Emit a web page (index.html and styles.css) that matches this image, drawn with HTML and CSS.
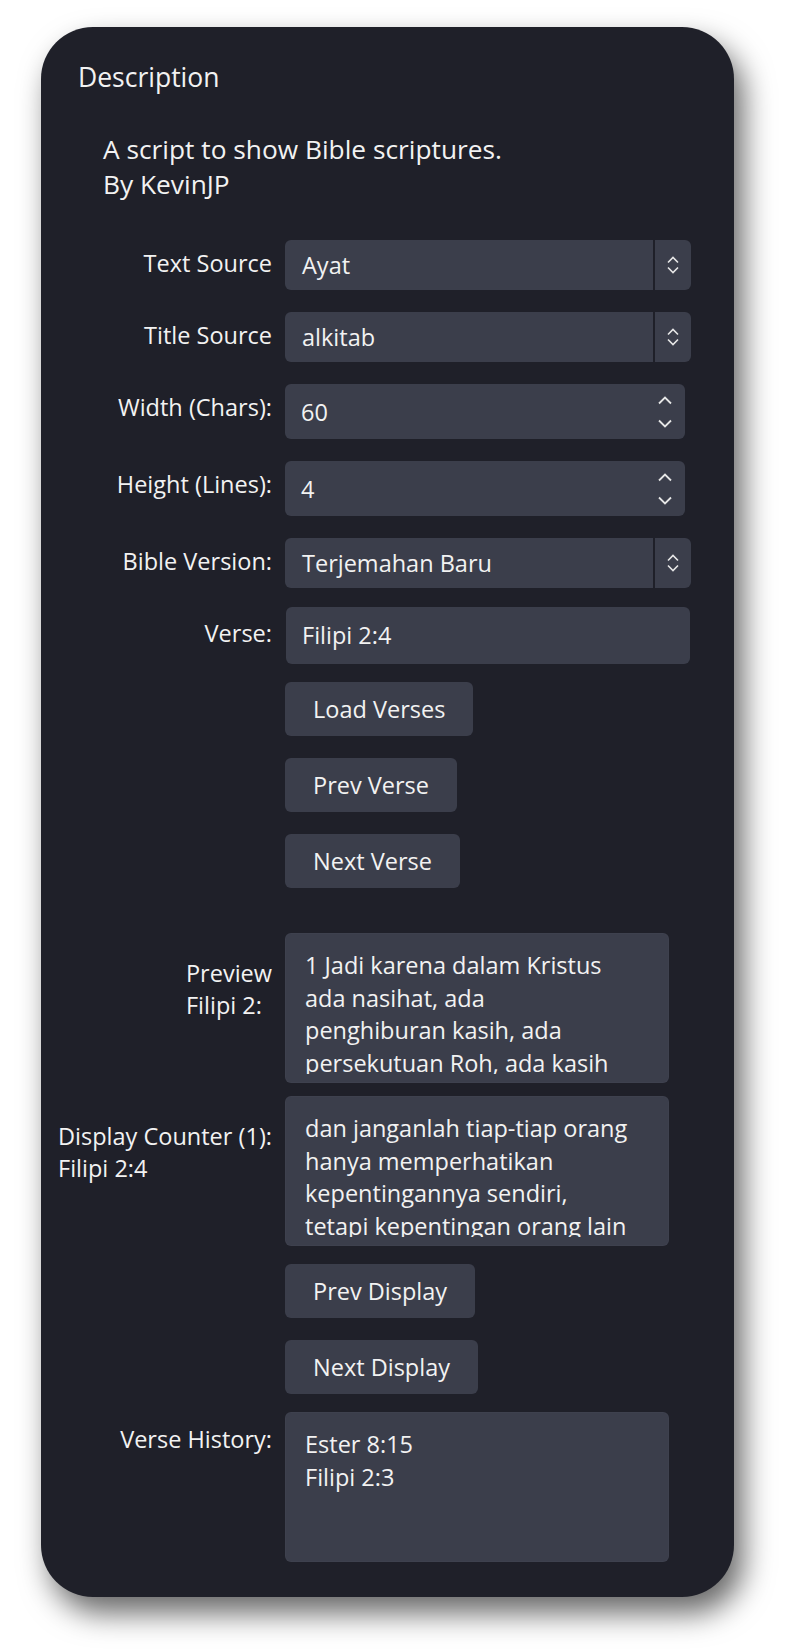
FILE: index.html
```html
<!DOCTYPE html>
<html lang="id">
<head>
    <meta charset="UTF-8">
    <meta name="viewport" content="width=device-width, initial-scale=1.0">
    <title>Script Properties</title>
    <link rel="stylesheet" href="styles.css">
</head>
<body>
    <div class="window">
        <div class="desc-title">Description</div>
        <div class="desc-text">A script to show Bible scriptures.<br>By KevinJP</div>

        <div class="form">
            <div class="row row-first">
                <div class="lbl">Text Source</div>
                <div class="select">
                    <div class="select-main">Ayat</div>
                    <div class="select-arrow">
                        <svg width="12" height="20" viewBox="0 0 12 20"><path d="M1 7.5 L6 2.5 L11 7.5 M1 12.5 L6 17.5 L11 12.5" fill="none" stroke="#e6e6e6" stroke-width="1.6"/></svg>
                    </div>
                </div>
            </div>

            <div class="row">
                <div class="lbl">Title Source</div>
                <div class="select">
                    <div class="select-main">alkitab</div>
                    <div class="select-arrow">
                        <svg width="12" height="20" viewBox="0 0 12 20"><path d="M1 7.5 L6 2.5 L11 7.5 M1 12.5 L6 17.5 L11 12.5" fill="none" stroke="#e6e6e6" stroke-width="1.6"/></svg>
                    </div>
                </div>
            </div>

            <div class="row">
                <div class="lbl">Width (Chars):</div>
                <div class="spin">
                    <span>60</span>
                    <svg width="14" height="32" viewBox="0 0 14 32"><path d="M1 7.5 L7 1.5 L13 7.5 M1 24.5 L7 30.5 L13 24.5" fill="none" stroke="#e6e6e6" stroke-width="1.8"/></svg>
                </div>
            </div>

            <div class="row">
                <div class="lbl">Height (Lines):</div>
                <div class="spin">
                    <span>4</span>
                    <svg width="14" height="32" viewBox="0 0 14 32"><path d="M1 7.5 L7 1.5 L13 7.5 M1 24.5 L7 30.5 L13 24.5" fill="none" stroke="#e6e6e6" stroke-width="1.8"/></svg>
                </div>
            </div>

            <div class="row">
                <div class="lbl">Bible Version:</div>
                <div class="select">
                    <div class="select-main">Terjemahan Baru</div>
                    <div class="select-arrow">
                        <svg width="12" height="20" viewBox="0 0 12 20"><path d="M1 7.5 L6 2.5 L11 7.5 M1 12.5 L6 17.5 L11 12.5" fill="none" stroke="#e6e6e6" stroke-width="1.6"/></svg>
                    </div>
                </div>
            </div>

            <div class="row row-19">
                <div class="lbl lbl-edit">Verse:</div>
                <div class="line-edit">Filipi 2:4</div>
            </div>

            <div class="row row-18">
                <div class="lbl"></div>
                <div class="btn">Load Verses</div>
            </div>

            <div class="row">
                <div class="lbl"></div>
                <div class="btn">Prev Verse</div>
            </div>

            <div class="row">
                <div class="lbl"></div>
                <div class="btn">Next Verse</div>
            </div>

            <div class="row row-45">
                <div class="lbl lbl-multi"><span>Preview<br>Filipi 2:</span></div>
                <div class="textbox">
                    <div class="textbox-inner">1 Jadi karena dalam Kristus<br>ada nasihat, ada<br>penghiburan kasih, ada<br>persekutuan Roh, ada kasih<br>mesra dan belas kasihan,</div>
                </div>
            </div>

            <div class="row row-13">
                <div class="lbl lbl-multi"><span>Display Counter (1):<br>Filipi 2:4</span></div>
                <div class="textbox">
                    <div class="textbox-inner">dan janganlah tiap-tiap orang<br>hanya memperhatikan<br>kepentingannya sendiri,<br>tetapi kepentingan orang lain<br>juga.</div>
                </div>
            </div>

            <div class="row row-18">
                <div class="lbl"></div>
                <div class="btn">Prev Display</div>
            </div>

            <div class="row">
                <div class="lbl"></div>
                <div class="btn">Next Display</div>
            </div>

            <div class="row row-18">
                <div class="lbl lbl-history">Verse History:</div>
                <div class="textbox">
                    <div class="textbox-inner">Ester 8:15<br>Filipi 2:3</div>
                </div>
            </div>
        </div>
    </div>
</body>
</html>
```
FILE: styles.css
```css
body {
    margin: 0;
    padding: 27px 0 60px 41px;
    background-color: #ffffff;
    font-family: "Open Sans", "Liberation Sans", sans-serif;
    color: #f2f2f2;
}
.window {
    width: 693px;
    padding: 33px 0 35px 0;
    box-sizing: border-box;
    background-color: #1f2029;
    border-radius: 52px;
    box-shadow: 9px 16px 30px rgba(0, 0, 0, 0.6);
}
.desc-title {
    padding-left: 37px;
    font-size: 26.5px;
    line-height: 35px;
}
.desc-text {
    margin-top: 37px;
    padding-left: 62px;
    font-size: 26.3px;
    line-height: 35px;
}
.form {
    padding-left: 9px;
    font-size: 23.5px;
}
.row {
    display: flex;
    align-items: flex-start;
    gap: 13px;
    margin-top: 22px;
}
.row-first {
    margin-top: 38px;
}
.row-19 {
    margin-top: 19px;
}
.row-18 {
    margin-top: 18px;
}
.row-13 {
    margin-top: 13px;
}
.row-45 {
    margin-top: 45px;
}
.lbl {
    width: 222px;
    flex: none;
    text-align: right;
    line-height: 32px;
    padding-top: 7px;
    white-space: nowrap;
}
.lbl-edit {
    padding-top: 10px;
}
.lbl-history {
    padding-top: 11px;
}
.lbl-multi {
    padding-top: 24px;
}
.lbl-multi span {
    display: inline-block;
    text-align: left;
}
.select {
    display: flex;
    width: 406px;
    height: 50px;
}
.select-main {
    flex: 1;
    background-color: #3b3e4b;
    border-radius: 6px 0 0 6px;
    padding-left: 17px;
    line-height: 50px;
}
.select-arrow {
    width: 36px;
    margin-left: 2px;
    background-color: #3b3e4b;
    border-radius: 0 6px 6px 0;
    display: flex;
    align-items: center;
    justify-content: center;
}
.spin {
    width: 400px;
    height: 55px;
    box-sizing: border-box;
    background-color: #3b3e4b;
    border-radius: 6px;
    padding: 0 13px 0 16px;
    display: flex;
    align-items: center;
    justify-content: space-between;
}
.line-edit {
    width: 404px;
    height: 57px;
    box-sizing: border-box;
    margin-left: 1px;
    background-color: #3b3e4b;
    border-radius: 6px;
    padding-left: 16px;
    line-height: 57px;
}
.btn {
    height: 54px;
    padding: 0 28px;
    background-color: #3b3e4b;
    border-radius: 6px;
    line-height: 54px;
    white-space: nowrap;
}
.textbox {
    width: 384px;
    height: 150px;
    box-sizing: border-box;
    background-color: #3b3e4b;
    border: 1px solid #44475560;
    border-radius: 6px;
    padding: 15px 19px 0 19px;
}
.textbox-inner {
    height: 125px;
    overflow: hidden;
    line-height: 32.6px;
    white-space: nowrap;
}
```
